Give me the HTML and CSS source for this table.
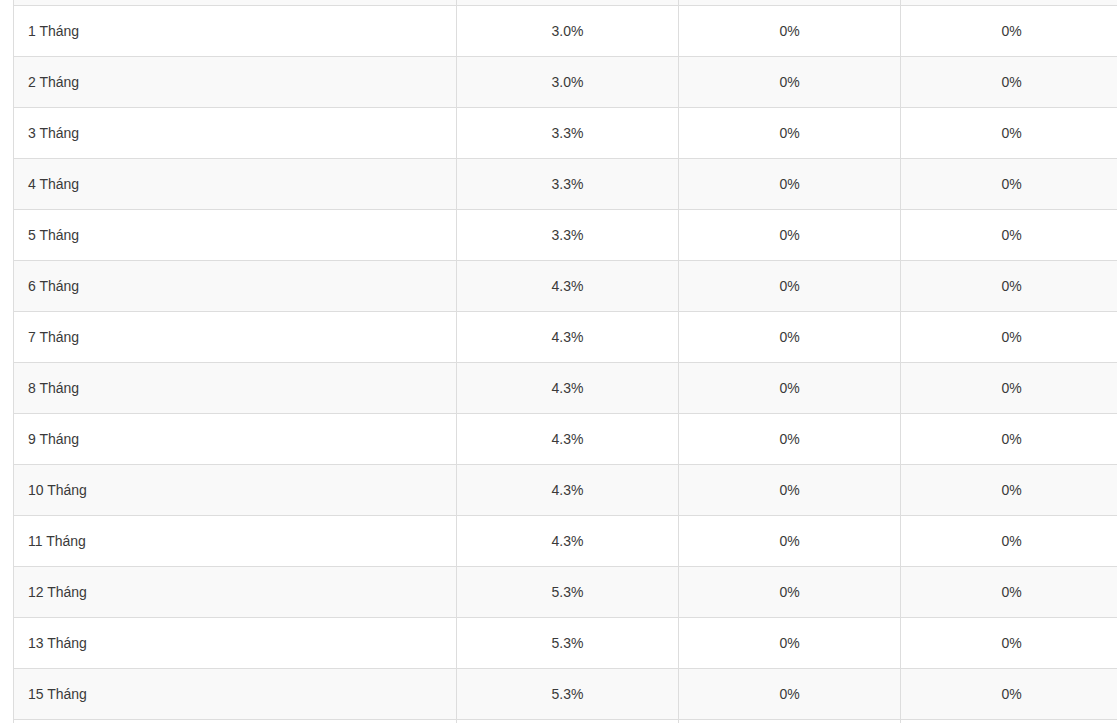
FILE: index.html
```html
<!DOCTYPE html>
<html lang="vi">
<head>
<meta charset="utf-8">
<link rel="stylesheet" href="styles.css">
</head>
<body>
<div class="wrap">
<table class="rates">
<colgroup>
<col class="c-term"><col class="c-rate"><col class="c-rate"><col class="c-rate">
</colgroup>
<tbody>
<tr class="edge"><td></td><td></td><td></td><td></td></tr>
<tr><td>1 Tháng</td><td>3.0%</td><td>0%</td><td>0%</td></tr>
<tr><td>2 Tháng</td><td>3.0%</td><td>0%</td><td>0%</td></tr>
<tr><td>3 Tháng</td><td>3.3%</td><td>0%</td><td>0%</td></tr>
<tr><td>4 Tháng</td><td>3.3%</td><td>0%</td><td>0%</td></tr>
<tr><td>5 Tháng</td><td>3.3%</td><td>0%</td><td>0%</td></tr>
<tr><td>6 Tháng</td><td>4.3%</td><td>0%</td><td>0%</td></tr>
<tr><td>7 Tháng</td><td>4.3%</td><td>0%</td><td>0%</td></tr>
<tr><td>8 Tháng</td><td>4.3%</td><td>0%</td><td>0%</td></tr>
<tr><td>9 Tháng</td><td>4.3%</td><td>0%</td><td>0%</td></tr>
<tr><td>10 Tháng</td><td>4.3%</td><td>0%</td><td>0%</td></tr>
<tr><td>11 Tháng</td><td>4.3%</td><td>0%</td><td>0%</td></tr>
<tr><td>12 Tháng</td><td>5.3%</td><td>0%</td><td>0%</td></tr>
<tr><td>13 Tháng</td><td>5.3%</td><td>0%</td><td>0%</td></tr>
<tr><td>15 Tháng</td><td>5.3%</td><td>0%</td><td>0%</td></tr>
<tr class="edge"><td></td><td></td><td></td><td></td></tr>
</tbody>
</table>
</div>
</body>
</html>
```
FILE: styles.css
```css
html, body {
  margin: 0;
  padding: 0;
  background: #fff;
  overflow: hidden;
}
.wrap {
  padding-left: 13px;
  width: 1109px;
  height: 723px;
  overflow: hidden;
}
.rates {
  border-collapse: collapse;
  table-layout: fixed;
  width: 1109px;
  margin-top: -46px;
  font-family: "Liberation Sans", Arial, sans-serif;
  font-size: 14px;
  line-height: 20px;
  color: #3a3a3a;
}
.c-term { width: 443px; }
.c-rate { width: 222px; }
.rates td {
  border: 1px solid #ddd;
  padding: 15px 14px;
  height: 20px;
  text-align: center;
}
.rates td:first-child {
  text-align: left;
}
.rates tr:nth-child(odd) td {
  background: #f9f9f9;
}
.rates tr:nth-child(even) td {
  background: #fff;
}
```
